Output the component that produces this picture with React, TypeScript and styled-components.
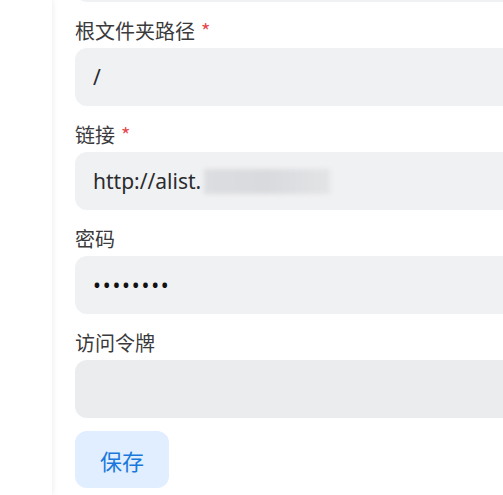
import React from "react";
import styled, { createGlobalStyle } from "styled-components";

const Global = createGlobalStyle`
  html, body {
    margin: 0;
    padding: 0;
    background: #ffffff;
    overflow: hidden;
    font-family: "Noto Sans", "Noto Sans CJK SC", sans-serif;
  }
`;

const Page = styled.div`
  display: flex;
  width: 503px;
  height: 495px;
  overflow: hidden;
  background: #ffffff;
`;

const Sidebar = styled.aside`
  flex: 0 0 52px;
  height: 100%;
  background: #ffffff;
  box-shadow: 1px 0 5px rgba(0, 0, 0, 0.07);
  position: relative;
  z-index: 1;
`;

const Main = styled.main`
  flex: 1 0 auto;
  padding-left: 23px;
  min-width: 700px;
`;

const Form = styled.form`
  display: flex;
  flex-direction: column;
  gap: 13px;
  margin-top: -56px;
`;

const Fields = styled.div`
  display: flex;
  flex-direction: column;
  gap: 17px;
`;

const Field = styled.div`
  display: flex;
  flex-direction: column;
  gap: 5px;
`;

const Label = styled.label`
  font-family: "Noto Sans CJK SC", sans-serif;
  font-size: 20px;
  line-height: 24px;
  color: #3a3a3c;
  display: flex;
  align-items: center;
  gap: 6px;
`;

const Required = styled.span`
  color: #e5484d;
  font-size: 20px;
`;

const InputWrap = styled.div`
  position: relative;
`;

const Input = styled.input<{ $shade?: boolean }>`
  box-sizing: border-box;
  width: 100%;
  height: 58px;
  border: none;
  outline: none;
  border-radius: 12px;
  background: ${(p) => (p.$shade ? "#ebecee" : "#f0f1f3")};
  padding: 0 18px;
  font-family: "Noto Sans", "Noto Sans CJK SC", sans-serif;
  font-size: 21px;
  color: #2b2b2d;
  &[type="password"] {
    letter-spacing: 1.8px;
    color: #111;
  }
`;

const Redaction = styled.span`
  position: absolute;
  left: 129px;
  top: 17px;
  width: 126px;
  height: 25px;
  background: linear-gradient(90deg, #dcdde0 0%, #d9dadd 50%, #e3e4e6 100%);
  filter: blur(2px);
`;

const SaveButton = styled.button`
  align-self: flex-start;
  width: 94px;
  height: 57px;
  border: none;
  border-radius: 12px;
  background: #e0eeff;
  color: #1a78dc;
  font-family: "Noto Sans CJK SC", sans-serif;
  font-size: 22px;
  cursor: pointer;
`;

export default function App() {
  return (
    <>
      <Global />
      <Page>
        <Sidebar />
        <Main>
          <Form onSubmit={(e) => e.preventDefault()}>
            <Fields>
              <InputWrap>
                <Input readOnly value="" aria-label="挂载路径" />
              </InputWrap>
              <Field>
                <Label>
                  根文件夹路径<Required>*</Required>
                </Label>
                <InputWrap>
                  <Input readOnly value="/" />
                </InputWrap>
              </Field>
              <Field>
                <Label>
                  链接<Required>*</Required>
                </Label>
                <InputWrap>
                  <Input readOnly value="http://alist." />
                  <Redaction />
                </InputWrap>
              </Field>
              <Field>
                <Label>密码</Label>
                <InputWrap>
                  <Input type="password" readOnly value="12345678" />
                </InputWrap>
              </Field>
              <Field>
                <Label>访问令牌</Label>
                <InputWrap>
                  <Input $shade readOnly value="" />
                </InputWrap>
              </Field>
            </Fields>
            <SaveButton type="submit">保存</SaveButton>
          </Form>
        </Main>
      </Page>
    </>
  );
}
